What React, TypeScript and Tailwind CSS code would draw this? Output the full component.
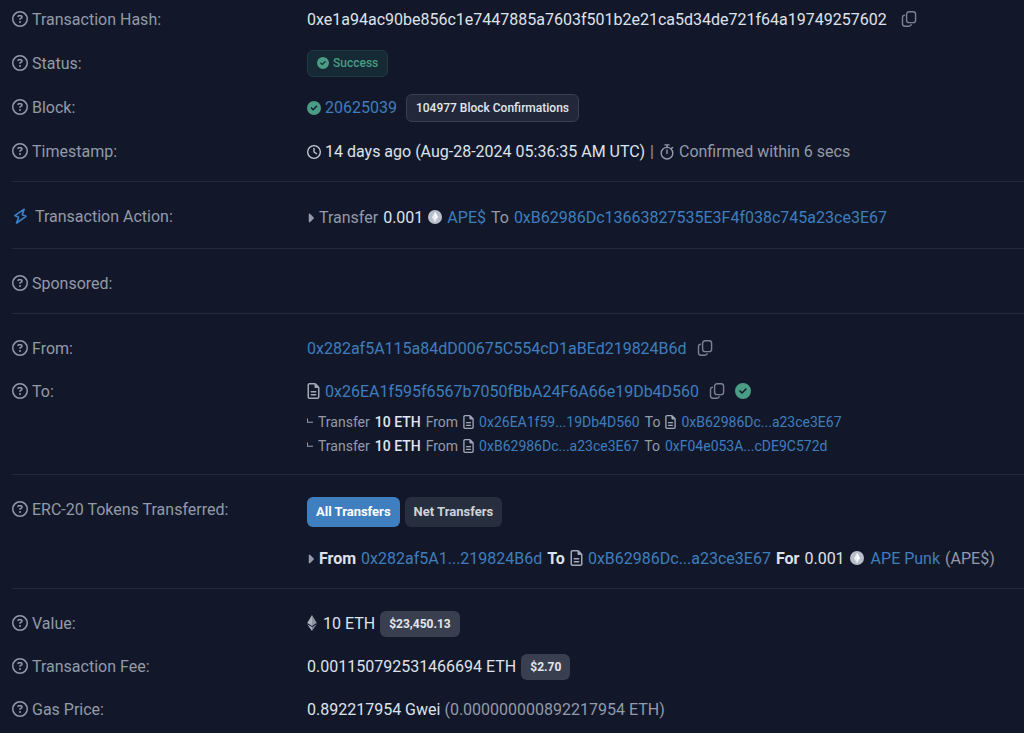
import type { ReactNode } from "react";
import { FaCaretRight, FaCircleCheck, FaRegCircleQuestion, FaRegClock, FaRegFileLines } from "react-icons/fa6";

function CopyIcon() {
  return (
    <svg viewBox="0 0 16 16" className="h-4 w-4" fill="none" stroke="currentColor" strokeWidth="1.4" strokeLinecap="round" strokeLinejoin="round" aria-hidden="true">
      <rect x="5.6" y="0.8" width="9" height="10.8" rx="2.4" />
      <path d="M3.4 4.2c-1.2.1-1.900.8-1.900 2v6.6c0 1.500.9 2.400 2.400 2.400h4c1.300 0 2.100-.6 2.300-1.600" />
    </svg>
  );
}

function BoltIcon() {
  return (
    <svg viewBox="0 0 16 16" className="h-4 w-4 text-[#3b82c8]" fill="none" stroke="currentColor" strokeWidth="1.6" strokeLinejoin="round" aria-hidden="true">
      <path d="M12.200 1.200 2.800 7.600 6.600 9.200 4.600 15 14 8.300 10.200 6.700z" />
    </svg>
  );
}

function StopwatchIcon() {
  return (
    <svg viewBox="0 0 16 16" className="h-4 w-4" fill="none" stroke="currentColor" strokeWidth="1.400" strokeLinecap="round" aria-hidden="true">
      <circle cx="8" cy="9.200" r="5.800" />
      <path d="M6 .9h4M8 .9v2.500M8 6v3.400M12.400 4.600l1.200-1.200" />
    </svg>
  );
}

function TokenIcon() {
  return (
    <svg viewBox="0 0 14 14" className="mb-[2px] h-[14px] w-[14px]" aria-hidden="true">
      <circle cx="7" cy="7" r="7" fill="#b9bfca" />
      <path d="M7 1.800 4 7.200 7 12.200l3-5z" fill="#e9ecf1" />
      <path d="M7 1.800v6.800l3-1.400z" fill="#ffffff" />
    </svg>
  );
}

function EtherIcon() {
  return (
    <svg viewBox="0 0 10 16" className="mb-[2px] h-4 w-[10px]" aria-hidden="true">
      <path d="M5 0 .2 8.100 5 10.900z" fill="#a9afbb" />
      <path d="M5 0v10.900l4.800-2.800z" fill="#8b92a0" />
      <path d="M.2 9.200 5 16v-4z" fill="#a9afbb" />
      <path d="M9.800 9.200 5 16v-4z" fill="#7b8290" />
    </svg>
  );
}

function CopyButton({ label }: { label: string }) {
  return (
    <button type="button" aria-label={label} className="mx-[10px] mb-[2px] text-[#7c8292]">
      <CopyIcon />
    </button>
  );
}

function AddressLink({ children }: { children: ReactNode }) {
  return (
    <a href="#" className="text-[#3f7ebc]">
      {children}
    </a>
  );
}

function FileIcon() {
  return <FaRegFileLines className="mb-[2px] h-4 w-[13px] shrink-0 text-[#a3a8b4]" aria-hidden="true" />;
}

function SmallFileIcon() {
  return <FaRegFileLines className="h-[14px] w-[11px] shrink-0 text-[#a3a8b4]" aria-hidden="true" />;
}

function Section({ children }: { children: ReactNode }) {
  return <dl className="ml-3 flex flex-col gap-[15px] border-b border-[#222b3b] pt-[21px] pb-[15px] last:border-b-0">{children}</dl>;
}

function Row({ label, icon, children }: { label: string; icon?: ReactNode; children?: ReactNode }) {
  return (
    <div className="grid grid-cols-[295px_1fr]">
      <dt className="flex h-7 items-center gap-1 text-[#949aa8]">
        {icon ?? <FaRegCircleQuestion className="mb-[2px] h-4 w-4" aria-hidden="true" />}
        <span>{label}</span>
      </dt>
      <dd className="whitespace-nowrap">{children}</dd>
    </div>
  );
}

function Line({ children }: { children: ReactNode }) {
  return <div className="flex h-7 items-center">{children}</div>;
}

function InternalTransfer({ from, to, fromContract, toContract }: { from: string; to: string; fromContract?: boolean; toContract?: boolean }) {
  return (
    <li className="flex h-6 items-center gap-[5px] text-sm">
      <svg viewBox="0 0 7 8" className="mb-[2px] h-2 w-[6px]" fill="none" stroke="currentColor" strokeWidth="1.2" aria-hidden="true">
        <path d="M.6 1v4.500H7" />
      </svg>
      <span>Transfer</span>
      <span className="font-medium text-[#e3e6ed]">10 ETH</span>
      <span>From</span>
      {fromContract && <SmallFileIcon />}
      <AddressLink>{from}</AddressLink>
      <span>To</span>
      {toContract && <SmallFileIcon />}
      <AddressLink>{to}</AddressLink>
    </li>
  );
}

export default function App() {
  return (
    <main className="min-h-screen overflow-hidden bg-[#12182a] font-[Roboto,sans-serif] text-base text-[#949aa8]">
      <dl className="ml-3 flex flex-col gap-4 border-b border-[#222b3b] pt-[6px] pb-[15px]">
        <Row label="Transaction Hash:">
          <Line>
            <span className="text-[#dfe2ea]">0xe1a94ac90be856c1e7447885a7603f501b2e21ca5d34de721f64a19749257602</span>
            <span className="ml-1 flex">
              <CopyButton label="Copy transaction hash" />
            </span>
          </Line>
        </Row>
        <Row label="Status:">
          <Line>
            <span className="mb-[2px] flex h-[27px] items-center gap-1 rounded-md border border-[#1d3b41] bg-[#152a35] px-[9px] text-xs font-medium text-[#4a9c84]">
              <FaCircleCheck className="h-3 w-3" aria-hidden="true" />
              Success
            </span>
          </Line>
        </Row>
        <Row label="Block:">
          <Line>
            <FaCircleCheck className="mr-1 h-[14px] w-[14px] text-[#4a9c84]" aria-hidden="true" />
            <AddressLink>20625039</AddressLink>
            <span className="ml-[9px] flex h-7 items-center rounded-md border border-[#3a4152] bg-[#22283a] px-[9px] text-xs font-medium text-[#e3e6ed]">
              104977 Block Confirmations
            </span>
          </Line>
        </Row>
        <Row label="Timestamp:">
          <Line>
            <FaRegClock className="mr-1 h-[14px] w-[14px] text-[#c9cdd6]" aria-hidden="true" />
            <span className="text-[#dfe2ea]">14 days ago (Aug-28-2024 05:36:35 AM UTC)</span>
            <span className="mx-[5px]">|</span>
            <StopwatchIcon />
            <span className="ml-1">Confirmed within 6 secs</span>
          </Line>
        </Row>
      </dl>

      <Section>
        <Row label="Transaction Action:" icon={<span className="mr-[3px] mb-[2px]"><BoltIcon /></span>}>
          <div className="flex h-[30px] items-center gap-[5px]">
            <FaCaretRight className="h-[14px] w-[7px]" aria-hidden="true" />
            <span>Transfer</span>
            <span className="text-[#dfe2ea]">0.001</span>
            <TokenIcon />
            <AddressLink>APE$</AddressLink>
            <span>To</span>
            <AddressLink>0xB62986Dc13663827535E3F4f038c745a23ce3E67</AddressLink>
          </div>
        </Row>
      </Section>

      <Section>
        <Row label="Sponsored:" />
      </Section>

      <Section>
        <Row label="From:">
          <Line>
            <AddressLink>0x282af5A115a84dD00675C554cD1aBEd219824B6d</AddressLink>
            <CopyButton label="Copy sender address" />
          </Line>
        </Row>
        <Row label="To:">
          <Line>
            <span className="mr-[5px] flex">
              <FileIcon />
            </span>
            <AddressLink>0x26EA1f595f6567b7050fBbA24F6A66e19Db4D560</AddressLink>
            <CopyButton label="Copy recipient address" />
            <FaCircleCheck className="mb-[2px] h-4 w-4 text-[#4a9c84]" aria-hidden="true" />
          </Line>
          <ul className="mt-1 mb-px">
            <InternalTransfer from="0x26EA1f59...19Db4D560" to="0xB62986Dc...a23ce3E67" fromContract toContract />
            <InternalTransfer from="0xB62986Dc...a23ce3E67" to="0xF04e053A...cDE9C572d" fromContract />
          </ul>
        </Row>
      </Section>

      <Section>
        <Row label="ERC-20 Tokens Transferred:">
          <div className="mt-px mb-[18px] flex gap-[5px] text-[13px] font-bold">
            <button type="button" className="h-[30px] rounded-md bg-[#3f7fc0] px-[9px] text-white">
              All Transfers
            </button>
            <button type="button" className="h-[30px] rounded-md bg-[#272f3e] px-[9px] text-[#cfd3dc]">
              Net Transfers
            </button>
          </div>
          <div className="flex h-7 items-center gap-[5px]">
            <FaCaretRight className="h-[14px] w-[7px]" aria-hidden="true" />
            <span className="font-bold text-[#dfe2ea]">From</span>
            <AddressLink>0x282af5A1...219824B6d</AddressLink>
            <span className="font-bold text-[#dfe2ea]">To</span>
            <FileIcon />
            <AddressLink>0xB62986Dc...a23ce3E67</AddressLink>
            <span className="font-bold text-[#dfe2ea]">For</span>
            <span className="text-[#dfe2ea]">0.001</span>
            <span className="mr-[2px]">
              <TokenIcon />
            </span>
            <AddressLink>APE Punk</AddressLink>
            <span>(APE$)</span>
          </div>
        </Row>
      </Section>

      <Section>
        <Row label="Value:">
          <Line>
            <EtherIcon />
            <span className="ml-[6px] text-[#dfe2ea]">10 ETH</span>
            <span className="ml-[5px] flex h-[26px] items-center rounded-md bg-[#3a3f50] px-[9px] text-xs font-bold text-[#e3e6ed]">$23,450.13</span>
          </Line>
        </Row>
        <Row label="Transaction Fee:">
          <Line>
            <span className="text-[#dfe2ea]">0.001150792531466694 ETH</span>
            <span className="ml-[5px] flex h-[26px] items-center rounded-md bg-[#3a3f50] px-[9px] text-xs font-bold text-[#e3e6ed]">$2.70</span>
          </Line>
        </Row>
        <Row label="Gas Price:">
          <Line>
            <span className="text-[#dfe2ea]">0.892217954 Gwei</span>
            <span className="ml-1">(0.000000000892217954 ETH)</span>
          </Line>
        </Row>
      </Section>
    </main>
  );
}
